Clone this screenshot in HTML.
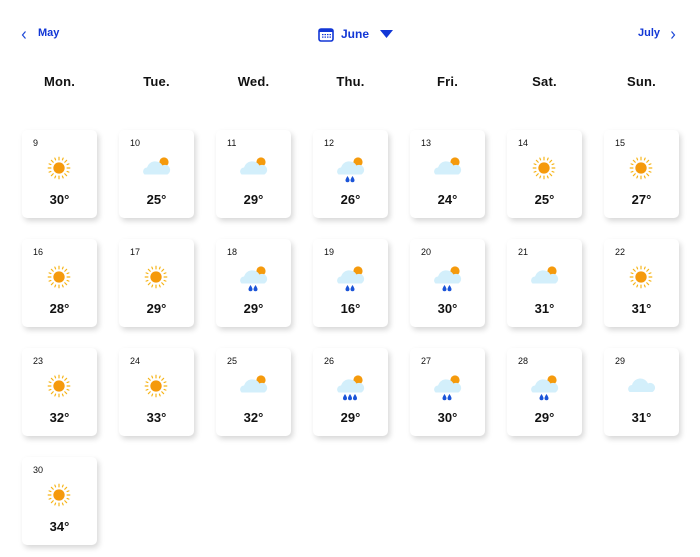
<!DOCTYPE html>
<html><head><meta charset="utf-8"><style>
body{margin:0;width:700px;height:557px;background:#fff;font-family:"Liberation Sans",sans-serif;position:relative;overflow:hidden}
.a{position:absolute}
.nav{color:#1237d6;font-weight:bold;font-size:11px}
.dn{position:absolute;top:74px;width:97px;text-align:center;font-size:13px;color:#111;font-weight:bold;letter-spacing:0.2px}
.c{position:absolute;width:75px;height:88px;background:#fff;border-radius:5px;box-shadow:2px 3px 6px rgba(0,0,0,0.16)}
.c .n{position:absolute;left:11px;top:8px;font-size:9px;color:#111}
.c .t{position:absolute;left:0;width:75px;top:62px;text-align:center;font-size:13px;font-weight:bold;color:#111}
.c svg{position:absolute;left:21px;top:22px;width:32px;height:32px}
</style></head><body>
<svg width="0" height="0" style="position:absolute">
<defs>
<g id="sun" transform="translate(16 16) scale(0.9) translate(-16 -16)"><g stroke="#f6b417" stroke-width="1.3" stroke-linecap="round"><line x1="16" y1="4" x2="16" y2="7"/><line x1="16" y1="25" x2="16" y2="28"/><line x1="4" y1="16" x2="7" y2="16"/><line x1="25" y1="16" x2="28" y2="16"/><line x1="7.5" y1="7.5" x2="9.6" y2="9.6"/><line x1="22.4" y1="22.4" x2="24.5" y2="24.5"/><line x1="7.5" y1="24.5" x2="9.6" y2="22.4"/><line x1="22.4" y1="9.6" x2="24.5" y2="7.5"/><line x1="11.4" y1="5" x2="12.2" y2="7"/><line x1="20.6" y1="5" x2="19.8" y2="7"/><line x1="11.4" y1="27" x2="12.2" y2="25"/><line x1="20.6" y1="27" x2="19.8" y2="25"/><line x1="5" y1="11.4" x2="7" y2="12.2"/><line x1="27" y1="11.4" x2="25" y2="12.2"/><line x1="5" y1="20.6" x2="7" y2="19.8"/><line x1="27" y1="20.6" x2="25" y2="19.8"/></g><circle cx="16" cy="16" r="6.3" fill="#f59a0c"/></g>
<g id="cs"><circle cx="24" cy="10" r="4.6" fill="#f59a0c"/><path d="M4.5 22.5 a4 4 0 0 1 2.5-7 a8.5 8.5 0 0 1 15.5-2 a5 5 0 0 1 5 9 z" fill="#d3effb"/></g>
<g id="cl"><path d="M4.5 22 a4 4 0 0 1 2.5-7 a8.5 8.5 0 0 1 16-1.5 a4.8 4.8 0 0 1 4.5 8.5 z" fill="#d3effb"/></g>
<path id="dr" d="M0 0 c0 0 -2 3 -2 4.2 a2 2 0 0 0 4 0 c0-1.2 -2-4.2 -2-4.2z" fill="#1b54d8"/>
<g id="r2"><use href="#cs"/><use href="#dr" x="13.5" y="24"/><use href="#dr" x="18.5" y="24"/></g>
<g id="r3"><use href="#cs"/><use href="#dr" x="11" y="24"/><use href="#dr" x="16" y="24"/><use href="#dr" x="21" y="24"/></g>
</defs></svg>

<svg class="a" style="left:21px;top:30px" width="6" height="10"><path d="M4.5 1.5 L1.5 5 L4.5 8.5" stroke="#1a46d6" stroke-width="1.2" fill="none"/></svg>
<div class="a nav" style="left:38px;top:27px">May</div>
<svg class="a" style="left:318px;top:27px" width="16" height="15"><rect x="1" y="2" width="14" height="12" rx="2" fill="none" stroke="#1237d6" stroke-width="1.6"/><rect x="1" y="2" width="14" height="3" fill="#1237d6"/><g fill="#1237d6"><rect x="4" y="7" width="1.5" height="1.2"/><rect x="6.5" y="7" width="1.5" height="1.2"/><rect x="9" y="7" width="1.5" height="1.2"/><rect x="11.5" y="7" width="1.5" height="1.2"/><rect x="4" y="9.5" width="1.5" height="1.2"/><rect x="6.5" y="9.5" width="1.5" height="1.2"/><rect x="9" y="9.5" width="1.5" height="1.2"/><rect x="11.5" y="9.5" width="1.5" height="1.2"/></g></svg>
<div class="a nav" style="left:341px;top:27px;font-size:12px">June</div>
<svg class="a" style="left:380px;top:30px" width="14" height="9"><path d="M0 0 H13 L6.5 8 Z" fill="#1237d6"/></svg>
<div class="a nav" style="left:638px;top:27px">July</div>
<svg class="a" style="left:670px;top:30px" width="6" height="10"><path d="M1.5 1.5 L4.5 5 L1.5 8.5" stroke="#1a46d6" stroke-width="1.2" fill="none"/></svg>

<div class="dn" style="left:11px">Mon.</div>
<div class="dn" style="left:108px">Tue.</div>
<div class="dn" style="left:205px">Wed.</div>
<div class="dn" style="left:302px">Thu.</div>
<div class="dn" style="left:399px">Fri.</div>
<div class="dn" style="left:496px">Sat.</div>
<div class="dn" style="left:593px">Sun.</div>

<div class="c" style="left:22px;top:130px"><div class="n">9</div><svg viewBox="0 0 32 32"><use href="#sun"/></svg><div class="t">30°</div></div>
<div class="c" style="left:119px;top:130px"><div class="n">10</div><svg viewBox="0 0 32 32"><use href="#cs"/></svg><div class="t">25°</div></div>
<div class="c" style="left:216px;top:130px"><div class="n">11</div><svg viewBox="0 0 32 32"><use href="#cs"/></svg><div class="t">29°</div></div>
<div class="c" style="left:313px;top:130px"><div class="n">12</div><svg viewBox="0 0 32 32"><use href="#r2"/></svg><div class="t">26°</div></div>
<div class="c" style="left:410px;top:130px"><div class="n">13</div><svg viewBox="0 0 32 32"><use href="#cs"/></svg><div class="t">24°</div></div>
<div class="c" style="left:507px;top:130px"><div class="n">14</div><svg viewBox="0 0 32 32"><use href="#sun"/></svg><div class="t">25°</div></div>
<div class="c" style="left:604px;top:130px"><div class="n">15</div><svg viewBox="0 0 32 32"><use href="#sun"/></svg><div class="t">27°</div></div>

<div class="c" style="left:22px;top:239px"><div class="n">16</div><svg viewBox="0 0 32 32"><use href="#sun"/></svg><div class="t">28°</div></div>
<div class="c" style="left:119px;top:239px"><div class="n">17</div><svg viewBox="0 0 32 32"><use href="#sun"/></svg><div class="t">29°</div></div>
<div class="c" style="left:216px;top:239px"><div class="n">18</div><svg viewBox="0 0 32 32"><use href="#r2"/></svg><div class="t">29°</div></div>
<div class="c" style="left:313px;top:239px"><div class="n">19</div><svg viewBox="0 0 32 32"><use href="#r2"/></svg><div class="t">16°</div></div>
<div class="c" style="left:410px;top:239px"><div class="n">20</div><svg viewBox="0 0 32 32"><use href="#r2"/></svg><div class="t">30°</div></div>
<div class="c" style="left:507px;top:239px"><div class="n">21</div><svg viewBox="0 0 32 32"><use href="#cs"/></svg><div class="t">31°</div></div>
<div class="c" style="left:604px;top:239px"><div class="n">22</div><svg viewBox="0 0 32 32"><use href="#sun"/></svg><div class="t">31°</div></div>

<div class="c" style="left:22px;top:348px"><div class="n">23</div><svg viewBox="0 0 32 32"><use href="#sun"/></svg><div class="t">32°</div></div>
<div class="c" style="left:119px;top:348px"><div class="n">24</div><svg viewBox="0 0 32 32"><use href="#sun"/></svg><div class="t">33°</div></div>
<div class="c" style="left:216px;top:348px"><div class="n">25</div><svg viewBox="0 0 32 32"><use href="#cs"/></svg><div class="t">32°</div></div>
<div class="c" style="left:313px;top:348px"><div class="n">26</div><svg viewBox="0 0 32 32"><use href="#r3"/></svg><div class="t">29°</div></div>
<div class="c" style="left:410px;top:348px"><div class="n">27</div><svg viewBox="0 0 32 32"><use href="#r2"/></svg><div class="t">30°</div></div>
<div class="c" style="left:507px;top:348px"><div class="n">28</div><svg viewBox="0 0 32 32"><use href="#r2"/></svg><div class="t">29°</div></div>
<div class="c" style="left:604px;top:348px"><div class="n">29</div><svg viewBox="0 0 32 32"><use href="#cl"/></svg><div class="t">31°</div></div>

<div class="c" style="left:22px;top:457px"><div class="n">30</div><svg viewBox="0 0 32 32"><use href="#sun"/></svg><div class="t">34°</div></div>
</body></html>
